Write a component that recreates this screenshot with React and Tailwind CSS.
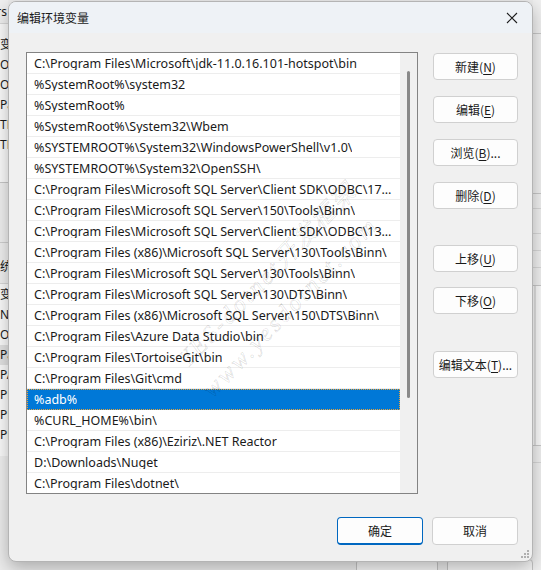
import React from "react";

const rows = [
  "C:\\Program Files\\Microsoft\\jdk-11.0.16.101-hotspot\\bin",
  "%SystemRoot%\\system32",
  "%SystemRoot%",
  "%SystemRoot%\\System32\\Wbem",
  "%SYSTEMROOT%\\System32\\WindowsPowerShell\\v1.0\\",
  "%SYSTEMROOT%\\System32\\OpenSSH\\",
  "C:\\Program Files\\Microsoft SQL Server\\Client SDK\\ODBC\\170\\Tools\\Binn\\",
  "C:\\Program Files\\Microsoft SQL Server\\150\\Tools\\Binn\\",
  "C:\\Program Files\\Microsoft SQL Server\\Client SDK\\ODBC\\130\\Tools\\Binn\\",
  "C:\\Program Files (x86)\\Microsoft SQL Server\\130\\Tools\\Binn\\",
  "C:\\Program Files\\Microsoft SQL Server\\130\\Tools\\Binn\\",
  "C:\\Program Files\\Microsoft SQL Server\\130\\DTS\\Binn\\",
  "C:\\Program Files (x86)\\Microsoft SQL Server\\150\\DTS\\Binn\\",
  "C:\\Program Files\\Azure Data Studio\\bin",
  "C:\\Program Files\\TortoiseGit\\bin",
  "C:\\Program Files\\Git\\cmd",
  "%adb%",
  "%CURL_HOME%\\bin\\",
  "C:\\Program Files (x86)\\Eziriz\\.NET Reactor",
  "D:\\Downloads\\Nuget",
  "C:\\Program Files\\dotnet\\",
];

const SELECTED = 16;

const userVars = ["变量", "OneDrive", "OneDrive", "Path", "TEMP", "TMP"];
const sysVars = ["变量", "NUMBER", "OS", "Path", "PATHEXT", "PROCESSOR", "PROCESSOR", "PROCESSOR"];

function Btn({ children, className = "" }) {
  return (
    <div
      className={
        "flex h-[27px] w-[85px] items-center justify-center rounded-[4px] border border-[#d0d0d0] bg-[#fdfdfd] text-[12px] text-[#1a1a1a] " +
        className
      }
    >
      {children}
    </div>
  );
}

function U({ children }) {
  return <span className="underline underline-offset-[2px]">{children}</span>;
}

function Line({ c = "bg-[#d0d0d0]" }) {
  return <div className={"h-px w-full shrink-0 " + c} />;
}

export default function App() {
  return (
    <div
      className="relative flex h-[570px] w-[541px] justify-between overflow-hidden bg-[#ececec] text-[#1a1a1a]"
      style={{ fontFamily: '"Noto Sans", "Noto Sans CJK SC", sans-serif' }}
    >
      {/* underlying window, left strip */}
      <div className="flex h-[500px] w-[10px] flex-col overflow-hidden bg-[#f0f0f0] text-[12px] leading-[20px]">
        <div className="h-[23px] shrink-0 whitespace-nowrap pt-[5px] leading-[14px]">
          <span className="-ml-[25px]">Users</span>
        </div>
        <Line c="bg-[#d8d8d8]" />
        <div className="flex h-[158px] shrink-0 flex-col bg-[#fbfbfb] pt-[11px]">
          {userVars.map((v, i) => (
            <div key={i} className="h-[20px] whitespace-nowrap">{v}</div>
          ))}
        </div>
        <Line c="bg-[#c8c8c8]" />
        <div className="h-[59px] shrink-0" />
        <Line />
        <div className="flex h-[40px] shrink-0 items-end whitespace-nowrap pb-[6px]">
          <span className="-ml-[12px]">系统变量</span>
        </div>
        <Line c="bg-[#d8d8d8]" />
        <div className="flex h-[172px] shrink-0 flex-col bg-[#fbfbfb] pt-[1px]">
          {sysVars.map((v, i) => (
            <div key={i} className={"h-[20px] whitespace-nowrap " + (i === 3 ? "bg-[#e3e3e3]" : "")}>
              {v}
            </div>
          ))}
        </div>
      </div>

      {/* dialog */}
      <div className="relative z-10 mt-[1px] flex h-[561px] w-[525px] shrink-0 flex-col overflow-hidden rounded-[8px] border border-[#b4b4b4] bg-[#f0f0f0] shadow-[0_6px_18px_rgba(0,0,0,0.28)]">
        {/* title bar */}
        <div className="flex h-[31px] shrink-0 items-center justify-between bg-[#eef2f6] pl-[8px] pr-[10px]">
          <span className="text-[12px]" style={{ fontFamily: '"Noto Sans CJK SC", sans-serif' }}>
            编辑环境变量
          </span>
          <svg width="12" height="12" viewBox="0 0 12 12" className="mr-[4px]">
            <path d="M1 1 L11 11 M11 1 L1 11" stroke="#1f1f1f" strokeWidth="1.1" />
          </svg>
        </div>

        {/* body */}
        <div className="flex flex-1 flex-col pl-[17px] pr-[14px] pt-[19px]">
          <div className="flex gap-[15px]">
            {/* list box */}
            <div className="flex h-[442px] w-[392px] border border-[#838383] bg-white">
              <div className="flex w-[373px] flex-col overflow-hidden">
                {rows.map((r, i) => (
                  <div
                    key={i}
                    className={
                      "flex h-[21px] shrink-0 items-center border-b pl-[7px] pr-[6px] pt-[2px] text-[12.5px] leading-none " +
                      (i === SELECTED
                        ? "border-b-[#0078d7] bg-[#0078d7] text-white outline outline-1 -outline-offset-1 outline-dotted outline-[#e8a23a]"
                        : "border-b-[#ededed]")
                    }
                  >
                    <span className="block overflow-hidden text-ellipsis whitespace-nowrap">{r}</span>
                  </div>
                ))}
              </div>
              <div className="flex w-[17px] justify-center bg-[#f0f0f0] pt-[18px]">
                <div className="h-[327px] w-[3px] rounded-full bg-[#8a8a8a]" />
              </div>
            </div>

            {/* right buttons */}
            <div
              className="flex flex-col pt-[1px]"
              style={{ fontFamily: '"Noto Sans CJK SC", sans-serif' }}
            >
              <Btn>新建(<U>N</U>)</Btn>
              <Btn className="mt-[16px]">编辑(<U>E</U>)</Btn>
              <Btn className="mt-[16px]">浏览(<U>B</U>)...</Btn>
              <Btn className="mt-[16px]">删除(<U>D</U>)</Btn>
              <Btn className="mt-[36px]">上移(<U>U</U>)</Btn>
              <Btn className="mt-[15px]">下移(<U>O</U>)</Btn>
              <Btn className="mt-[37px]">编辑文本(<U>T</U>)...</Btn>
            </div>
          </div>

          {/* bottom buttons */}
          <div
            className="mt-[23px] flex justify-end gap-[9px]"
            style={{ fontFamily: '"Noto Sans CJK SC", sans-serif' }}
          >
            <div className="flex h-[28px] w-[86px] items-center justify-center rounded-[4px] border border-b-2 border-[#0067c0] bg-[#fdfdfd] text-[12px]">
              确定
            </div>
            <div className="flex h-[28px] w-[86px] items-center justify-center rounded-[4px] border border-[#d0d0d0] bg-[#fdfdfd] text-[12px]">
              取消
            </div>
          </div>
        </div>

        {/* resize grip */}
        <div className="absolute bottom-[3px] right-[3px] grid grid-cols-3 gap-[1px]">
          <span />
          <span />
          <span className="h-[2px] w-[2px] bg-[#b0b0b0]" />
          <span />
          <span className="h-[2px] w-[2px] bg-[#b0b0b0]" />
          <span className="h-[2px] w-[2px] bg-[#b0b0b0]" />
          <span className="h-[2px] w-[2px] bg-[#b0b0b0]" />
          <span className="h-[2px] w-[2px] bg-[#b0b0b0]" />
          <span className="h-[2px] w-[2px] bg-[#b0b0b0]" />
        </div>
      </div>

      {/* underlying window, right strip */}
      <div className="flex h-[570px] w-[8px] shrink-0 flex-col bg-[#f0f0f0]">
        <div className="h-[33px] shrink-0" />
        <Line c="bg-[#c8c8c8]" />
        <div className="h-[159px] shrink-0" />
        <Line c="bg-[#c8c8c8]" />
        <div className="h-[14px] shrink-0" />
        <Line c="bg-[#d8d8d8]" />
        <div className="h-[24px] shrink-0" />
        <Line c="bg-[#d8d8d8]" />
        <div className="h-[16px] shrink-0" />
        <Line c="bg-[#d8d8d8]" />
        <div className="h-[16px] shrink-0" />
        <Line c="bg-[#d8d8d8]" />
        <div className="h-[17px] shrink-0" />
        <Line c="bg-[#c8c8c8]" />
        <div className="flex h-[159px] shrink-0 bg-[#fafafa]">
          <div className="ml-[1px] w-[2px] bg-[#e0e0e0]" />
        </div>
        <Line c="bg-[#c8c8c8]" />
        <div className="h-[16px] shrink-0" />
        <Line c="bg-[#d8d8d8]" />
      </div>

      {/* underlying dialog buttons peeking out below */}
      <div className="absolute left-[356px] top-[559px] flex gap-[9px]">
        <div className="h-[20px] w-[82px] rounded-[4px] border border-[#c4c4c4] bg-[#f6f6f6]" />
        <div className="h-[20px] w-[86px] rounded-[4px] border border-[#c4c4c4] bg-[#f6f6f6]" />
      </div>

      {/* watermark */}
      <div
        className="pointer-events-none absolute left-[182px] top-[345px] z-20 origin-left -rotate-[46deg] whitespace-nowrap text-[24px] italic tracking-[3px] text-transparent [-webkit-text-stroke:0.6px_rgba(0,0,0,0.16)]"
        style={{ fontFamily: '"Liberation Serif", "Noto Sans CJK SC", serif' }}
      >
        YES-dotnet开发框架
      </div>
      <div
        className="pointer-events-none absolute left-[207px] top-[375px] z-20 origin-left -rotate-[46deg] whitespace-nowrap text-[24px] italic tracking-[3px] text-transparent [-webkit-text-stroke:0.6px_rgba(0,0,0,0.16)]"
        style={{ fontFamily: '"Liberation Serif", "Noto Sans CJK SC", serif' }}
      >
        www.yesdotnet.com
      </div>
    </div>
  );
}
